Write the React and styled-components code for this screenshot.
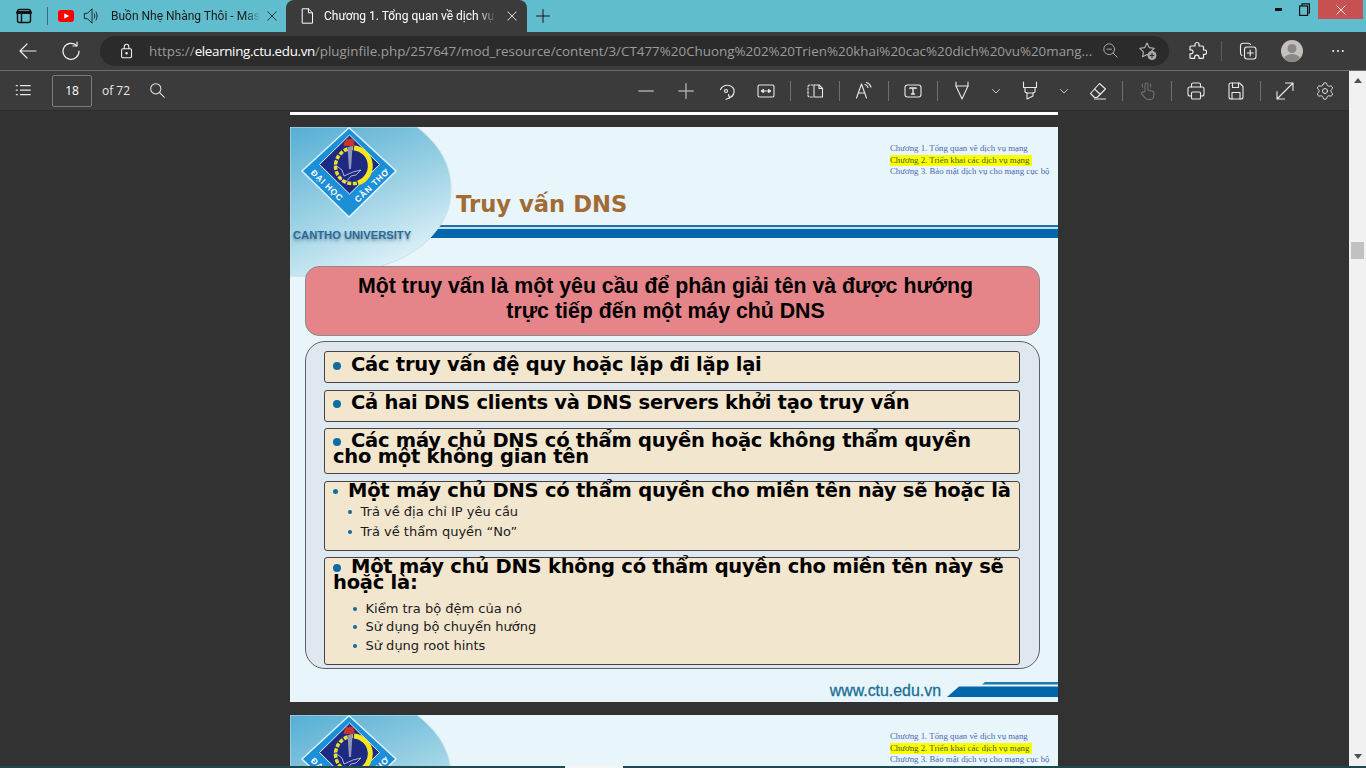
import styled, { createGlobalStyle } from 'styled-components';
import { Settings } from 'lucide-react';

const GlobalStyle = createGlobalStyle`
  html, body {
    margin: 0;
    padding: 0;
    background: #323232;
    overflow: hidden;
  }
  * {
    box-sizing: border-box;
  }
`;

const Browser = styled.div`
  width: 1366px;
  height: 768px;
  display: flex;
  flex-direction: column;
  overflow: hidden;
  font-family: "Open Sans", "Noto Sans", sans-serif;
`;

/* tab strip */

const TabStrip = styled.div`
  height: 32px;
  flex: none;
  display: flex;
  background: #60bdcd;
  color: #111;
`;

const SideButton = styled.div`
  width: 47px;
  display: flex;
  align-items: center;
  justify-content: center;
`;

const TabDivider = styled.div`
  width: 1px;
  height: 18px;
  margin-top: 7px;
  background: #3c6d76;
`;

const Tab = styled.div`
  width: ${(p) => p.$width}px;
  display: flex;
  align-items: center;
  padding-left: ${(p) => p.$inset}px;
  color: ${(p) => (p.$active ? '#fff' : '#1a1a1a')};
  background: ${(p) => (p.$active ? '#3b3b3b' : 'transparent')};
  border-radius: 8px 8px 0 0;
`;

const TabIcon = styled.span`
  display: flex;
  margin-right: ${(p) => p.$gap}px;
`;

const TabTitle = styled.span`
  width: ${(p) => p.$width}px;
  overflow: hidden;
  white-space: nowrap;
  font-family: Roboto, "Open Sans", sans-serif;
  font-size: 12px;
  -webkit-mask-image: linear-gradient(to right, #000 90%, transparent);
  mask-image: linear-gradient(to right, #000 90%, transparent);
`;

const TabClose = styled.span`
  display: flex;
  margin-left: ${(p) => p.$gap}px;
`;

const NewTab = styled.div`
  width: 32px;
  display: flex;
  align-items: center;
  justify-content: center;
`;

const CaptionButtons = styled.div`
  margin-left: auto;
  margin-right: 3px;
  height: 19px;
  display: flex;
`;

const CaptionButton = styled.div`
  width: ${(p) => p.$width}px;
  display: flex;
  align-items: center;
  justify-content: center;
  background: ${(p) => p.$bg || 'transparent'};
  color: ${(p) => p.$color || '#111'};
`;

/* address bar */

const NavBar = styled.div`
  height: 39px;
  flex: none;
  display: flex;
  align-items: center;
  padding-bottom: 1px;
  background: #3b3b3b;
  border-bottom: 1px solid #6c6c6c;
  color: #eee;
`;

const NavButton = styled.div`
  width: ${(p) => p.$width}px;
  flex: none;
  display: flex;
  align-items: center;
  justify-content: center;
`;

const AddressPill = styled.div`
  width: 1069px;
  height: 30px;
  margin: 0 ${(p) => p.$after}px 0 0;
  padding-left: 18px;
  flex: none;
  display: flex;
  align-items: center;
  border-radius: 15px;
  background: #2b2b2b;
`;

const Url = styled.div`
  width: 944px;
  margin-left: 13px;
  flex: none;
  overflow: hidden;
  white-space: nowrap;
  font-size: 13.4px;
  color: #9b9b9b;

  & > b {
    font-weight: 400;
    letter-spacing: -0.35px;
    color: #fff;
  }
`;

const PillIcon = styled.span`
  display: flex;
  margin-left: ${(p) => p.$gap}px;
  color: ${(p) => p.$color || '#a8a8a8'};
`;

const NavDivider = styled.div`
  width: 1px;
  height: 20px;
  margin-left: 6px;
  flex: none;
  background: #5c5c5c;
`;

const Avatar = styled.div`
  width: 22px;
  height: 22px;
  flex: none;
  border-radius: 50%;
  overflow: hidden;
  background: #c4c0bd;
`;

/* pdf toolbar */

const PdfBar = styled.div`
  height: 40px;
  flex: none;
  display: flex;
  align-items: center;
  padding-right: 4px;
  background: #3b3b3b;
  border-bottom: 1px solid #2c2c2c;
  color: #e8e8e8;
  font-size: 12px;
`;

const PageInput = styled.div`
  width: 40px;
  height: 32px;
  margin: 0 10px 0 4px;
  flex: none;
  display: flex;
  align-items: center;
  justify-content: center;
  border: 1px solid #7c7c7c;
  border-radius: 2px;
  color: #fff;
`;

const PageCount = styled.span`
  width: 27px;
  flex: none;
  white-space: nowrap;
`;

const Tools = styled.div`
  margin-left: auto;
  display: flex;
  align-items: center;
`;

const Tool = styled.div`
  width: ${(p) => p.$width || 40}px;
  height: 32px;
  display: flex;
  align-items: center;
  justify-content: center;
  color: ${(p) => p.$color || '#e8e8e8'};
`;

const ToolSep = styled.div`
  width: 1px;
  height: 20px;
  margin: 0 4px;
  background: #707070;
`;

/* viewer */

const Workspace = styled.div`
  flex: 1;
  min-height: 0;
  display: flex;
`;

const DocColumn = styled.div`
  flex: 1;
  min-width: 0;
  display: flex;
  flex-direction: column;
`;

const Viewer = styled.div`
  flex: 1;
  min-height: 0;
  display: flex;
  flex-direction: column;
  align-items: center;
  padding-right: 1px;
  overflow: hidden;
  background: #323232;
`;

const PrevEdge = styled.div`
  width: 768px;
  height: 3px;
  margin-top: 1px;
  flex: none;
  background: #fff;
`;

const Scrollbar = styled.div`
  width: 17px;
  flex: none;
  position: relative;
  display: flex;
  flex-direction: column;
  align-items: center;
  justify-content: space-between;
  padding: 7px 0;
  background: #f1f1f1;
`;

const Thumb = styled.div`
  position: absolute;
  top: 171px;
  left: 2px;
  width: 13px;
  height: 17px;
  background: #c1c1c1;
`;

const Arrow = styled.div`
  width: 0;
  height: 0;
  border-left: 4px solid transparent;
  border-right: 4px solid transparent;
  border-${(p) => (p.$up ? 'bottom' : 'top')}: 5px solid #505050;
`;

const TaskEdge = styled.div`
  height: 2px;
  flex: none;
  display: flex;
  padding-left: 565px;
  background: #1f474e;

  & > i {
    width: 58px;
    background: #f4f4f4;
  }
`;

/* slide */

const Slide = styled.section`
  width: 768px;
  height: 575px;
  margin-top: ${(p) => p.$top}px;
  flex: none;
  position: relative;
  display: flex;
  flex-direction: column;
  overflow: hidden;
  background: #e8f6fb;
`;

const Backdrop = styled.svg`
  position: absolute;
  top: 0;
  left: 0;
`;

const SlideHead = styled.header`
  height: 139px;
  flex: none;
  display: grid;
  grid-template-columns: 166px 1fr;
`;

const Brand = styled.div`
  position: relative;
  display: flex;
  flex-direction: column;
  padding-left: 3px;
`;

const BrandLogo = styled.svg`
  margin-left: 8px;
  display: block;
`;

const BrandName = styled.div`
  margin-top: 10px;
  font-family: "Liberation Sans", sans-serif;
  font-size: 11.2px;
  line-height: 14px;
  font-weight: 700;
  white-space: nowrap;
  color: #2c6a96;
  text-shadow: 0 2px 3px rgba(60, 90, 120, 0.55);
`;

const HeadMain = styled.div`
  display: flex;
  flex-direction: column;
`;

const Chapters = styled.ul`
  list-style: none;
  width: 159px;
  height: 49px;
  margin: 16px 9px 0 auto;
  padding: 0;
  font-family: "Liberation Serif", serif;
  font-size: 8.8px;
  line-height: 11.5px;
  white-space: nowrap;
  color: #4f66b5;
`;

const Chapter = styled.li`
  width: ${(p) => (p.$current ? '142px' : 'auto')};
  background: ${(p) => (p.$current ? '#ffff00' : 'transparent')};
  color: ${(p) => (p.$current ? '#3a6130' : 'inherit')};
`;

const SlideTitle = styled.h1`
  height: 30px;
  margin: 0;
  font-family: "DejaVu Sans", sans-serif;
  font-size: 22.7px;
  line-height: 24px;
  font-weight: 700;
  color: #a26b35;
`;

const TitleRule = styled.div`
  height: 13px;
  margin: 3px 0 0 -50px;
  flex: none;
  border-top: 2px solid #1f6ea6;
  background: linear-gradient(to bottom, #c4e2ee 0 2px, #0066ab 2px);
`;

const SlideBody = styled.div`
  position: relative;
  margin: 0 18px 0 15px;
  display: flex;
  flex-direction: column;
  gap: 5px;
`;

const Lead = styled.div`
  height: 70px;
  padding: 7px 14px 0 0;
  border: 1px solid #8b8b8b;
  border-radius: 14px;
  background: #e5858a;
  text-align: center;
  font-family: "Liberation Sans", sans-serif;
  font-size: 21.3px;
  line-height: 25px;
  font-weight: 700;
  color: #000;
`;

const Panel = styled.div`
  height: 328px;
  padding: 9px 19px 0 18px;
  display: flex;
  flex-direction: column;
  gap: 6.5px;
  border: 1px solid #606060;
  border-radius: 20px;
  background: #dfe7f1;
`;

const Row = styled.div`
  height: ${(p) => p.$height}px;
  flex: none;
  padding: ${(p) => p.$top}px 0 0 8px;
  border: 1px solid #444;
  border-radius: 3px;
  background: #f2e6cf;
  font-family: "DejaVu Sans", sans-serif;
  color: #000;
`;

const RowText = styled.div`
  font-size: 19.5px;
  line-height: 16px;
  letter-spacing: -0.24px;
  font-weight: 700;
  white-space: nowrap;
`;

const Dot = styled.span`
  display: inline-block;
  width: ${(p) => p.$size}px;
  height: ${(p) => p.$size}px;
  margin-right: 10px;
  vertical-align: ${(p) => p.$lift}px;
  border-radius: 50%;
  background: #0e6ca0;
`;

const SubList = styled.ul`
  list-style: none;
  margin: ${(p) => p.$top}px 0 0 ${(p) => p.$left}px;
  padding: 0;
  display: flex;
  flex-direction: column;
  gap: ${(p) => p.$gap}px;
`;

const SubItem = styled.li`
  display: flex;
  align-items: center;
  gap: 8.5px;
  font-size: 13px;
  line-height: 16px;
  color: #1a1a1a;

  &::before {
    content: '';
    width: 4px;
    height: 4px;
    border-radius: 50%;
    background: #0e6ca0;
  }
`;

const SlideFoot = styled.footer`
  margin-top: auto;
  height: 33px;
  flex: none;
  display: flex;
  align-items: flex-end;
  justify-content: flex-end;
`;

const FootUrl = styled.span`
  margin: 0 6px 3px 0;
  font-family: "Liberation Sans", sans-serif;
  font-size: 15.9px;
  line-height: 17px;
  color: #1a6f96;
  -webkit-text-stroke: 0.3px #1a6f96;
`;

const FootMark = styled.svg`
  display: block;
  margin-bottom: 5px;
`;

/* icons */

const Line = ({ size = 20, sw = 1.2, children, ...rest }) => (
  <svg
    width={size}
    height={size}
    viewBox="0 0 20 20"
    fill="none"
    stroke="currentColor"
    strokeWidth={sw}
    strokeLinecap="round"
    strokeLinejoin="round"
    {...rest}
  >
    {children}
  </svg>
);

const SidebarIcon = () => (
  <Line sw={1.4} size={20}>
    <rect x="3.5" y="3.5" width="13" height="13" rx="2" />
    <path d="M3.5 6.5h13" strokeWidth="3" />
    <path d="M7.5 6v10" />
  </Line>
);

const YoutubeIcon = () => (
  <svg width="16" height="12" viewBox="0 0 16 12">
    <rect width="16" height="12" rx="3" fill="#f00" />
    <path d="M6.3 3.3v5.4L11 6z" fill="#fff" />
  </svg>
);

const SpeakerIcon = () => (
  <Line size={18} sw={1}>
    <path d="M2 7h3l5-5v16l-5-5H2z" />
    <path d="M12.5 7.5c.8 1.4.8 3.600 0 5M14.500 5.500c1.500 2.800 1.500 6.200 0 9" />
  </Line>
);

const DocIcon = () => (
  <Line size={18} sw={1.1}>
    <path d="M4 2h6.500L15 6.500V18H4z" />
    <path d="M10.500 2v4.500H15" />
  </Line>
);

const CloseIcon = () => (
  <Line size={12} sw={1.4}>
    <path d="M3 3l14 14M17 3L3 17" />
  </Line>
);

const PlusIcon = ({ size = 16, sw = 1.2 }) => (
  <Line size={size} sw={sw}>
    <path d="M10 2v16M2 10h16" />
  </Line>
);

const BackIcon = () => (
  <Line sw={1.2}>
    <path d="M18 10H2M9 3l-7 7 7 7" />
  </Line>
);

const RefreshIcon = () => (
  <Line sw={1.2}>
    <path d="M15.500 4.500A8 8 0 1 0 18 10" />
    <path d="M16 1v4h-4" />
  </Line>
);

const LockIcon = () => (
  <Line size={18} sw={1.2}>
    <rect x="4" y="7.500" width="11" height="10" rx="1.500" />
    <path d="M7 7.500V5a2.500 2.500 0 0 1 5 0v2.500" />
    <circle cx="9.500" cy="12.500" r=".8" fill="currentColor" />
  </Line>
);

const ZoomOutIcon = () => (
  <Line size={18} sw={1.1}>
    <circle cx="8" cy="8" r="6" />
    <path d="M5.500 8h5M12.500 12.500L17 17" />
  </Line>
);

const StarAddIcon = () => (
  <svg width="20" height="20" viewBox="0 0 20 20">
    <path
      d="M9 2l2.200 4.600 5 .7-3.600 3.500.8 5L9 13.500 4.600 15.800l.8-5L1.800 7.300l5-.7z"
      fill="none"
      stroke="#b4b4b4"
      strokeWidth="1.100"
      strokeLinejoin="round"
    />
    <circle cx="14" cy="14.500" r="4.500" fill="#a8a8a8" />
    <path d="M14 12.300v4.400M11.800 14.500h4.400" stroke="#2b2b2b" strokeWidth="1.200" />
  </svg>
);

const PuzzleIcon = () => (
  <Line sw={1.2}>
    <path d="M8 3.500a2 2 0 0 1 4 0V5h3.500a1 1 0 0 1 1 1v3h1a2.200 2.200 0 0 1 0 4.400h-1v3a1 1 0 0 1-1 1H12v-1a2.200 2.200 0 0 0-4.400 0v1H4a1 1 0 0 1-1-1v-3.500h1a2 2 0 0 0 0-4H3V6a1 1 0 0 1 1-1h4z" />
  </Line>
);

const CollectionsIcon = () => (
  <Line sw={1.1}>
    <path d="M4 14.500c-1-.5-1.500-1.300-1.500-2.500V5c0-1.800 1-2.800 2.800-2.800h5c1 0 1.800.4 2.300 1.300" />
    <rect x="6.500" y="6" width="11.500" height="12" rx="2.500" />
    <path d="M12.200 9v6M9.200 12h6" />
  </Line>
);

const ListIcon = () => (
  <Line size={18} sw={1.2}>
    <path d="M6 4h11M6 9h11M6 14h11" />
    <path d="M1.500 4h1M1.500 9h1M1.500 14h1" strokeWidth="1.600" />
  </Line>
);

const SearchIcon = () => (
  <Line size={17} sw={1.2}>
    <circle cx="8" cy="8" r="6" />
    <path d="M12.500 12.500L18 18" />
  </Line>
);

const RotateIcon = () => (
  <Line sw={1.2}>
    <path d="M4.500 8.500A7.500 7.500 0 0 1 18 8.500c.6 4-1.500 7-4.500 8.300" />
    <path d="M12.500 13.500l1 3.500-3.500 1.200" />
    <circle cx="10" cy="10" r="1.500" />
  </Line>
);

const FitWidthIcon = () => (
  <Line sw={1.1}>
    <rect x="2" y="4" width="16" height="12" rx="1.500" />
    <path d="M5.500 10h9" />
    <path d="M7.500 8.500L5.500 10l2 1.500zM12.500 8.500l2 1.500-2 1.500z" fill="currentColor" />
  </Line>
);

const PageViewIcon = () => (
  <Line sw={1.1}>
    <path d="M8 4H4.500A1.500 1.500 0 0 0 3 5.500v9A1.500 1.500 0 0 0 4.500 16H8" strokeDasharray="2 1.500" />
    <path d="M9 4h5l3.500 3.500V16H9z" />
    <path d="M14 4v3.500h3.500" />
  </Line>
);

const ReadAloudIcon = () => (
  <Line sw={1.1}>
    <path d="M2.500 17L7.500 3l5 14M4.500 12h6" />
    <path d="M11 3.500c1.500.4 2.500 1.400 3 3M12.500 1.500c2.200.6 3.700 2.100 4.500 4.500" />
  </Line>
);

const TextBoxIcon = () => (
  <Line sw={1.1}>
    <rect x="2" y="4" width="16" height="12" rx="2.500" />
    <path d="M7 7.500V7h6v.5M10 7v6M8.500 13h3" strokeWidth="1.400" />
  </Line>
);

const DrawIcon = () => (
  <Line sw={1.1}>
    <path d="M4 1v4l6 13 6-13V1" />
    <path d="M4 5h12" />
  </Line>
);

const ChevronIcon = () => (
  <Line size={10} sw={1.600}>
    <path d="M3 7l7 7 7-7" />
  </Line>
);

const HighlightIcon = () => (
  <Line sw={1.1}>
    <path d="M3.500 1v5.500h13V1" />
    <path d="M5 6.500V11l2 1v6l6-3v-3l2-1V6.500" />
    <path d="M7 12h6" />
  </Line>
);

const EraserIcon = () => (
  <Line sw={1.1}>
    <path d="M11.500 2.500l6 5.500-8.500 8.500H6.500L2.500 12.500z" />
    <path d="M6.500 8l6 5.500M6.500 18h11" />
  </Line>
);

const TouchIcon = () => (
  <Line sw={1.1}>
    <path d="M8 10V3.500a1.500 1.500 0 0 1 3 0V9l4 1c1.500.5 2.200 1.500 2 3l-.5 3c-.3 1.500-1 2.500-2.500 2.500h-3c-1.200 0-2-.5-2.700-1.500L4.500 13c-.8-1.500 1-2.800 2.200-1.500z" />
    <path d="M5.500 6a4 4 0 0 1 0-3M13.500 6a4 4 0 0 0 0-3" />
  </Line>
);

const PrintIcon = () => (
  <Line sw={1.1}>
    <path d="M5.500 6V3.500A1.500 1.500 0 0 1 7 2h6a1.500 1.500 0 0 1 1.500 1.500V6" />
    <path d="M5.500 15H4a2 2 0 0 1-2-2V8a2 2 0 0 1 2-2h12a2 2 0 0 1 2 2v5a2 2 0 0 1-2 2h-1.500" />
    <rect x="5.500" y="11" width="9" height="7" rx="1" />
  </Line>
);

const SaveIcon = () => (
  <Line sw={1.1}>
    <path d="M3 4a2 2 0 0 1 2-2h8.500L17 5.500V16a2 2 0 0 1-2 2H5a2 2 0 0 1-2-2z" />
    <path d="M6.500 2v4.500h6V2M6 18v-6.500h8V18" />
  </Line>
);

const ExpandIcon = () => (
  <Line sw={1.1}>
    <path d="M2 18L18 2M10.500 2H18v7.500M2 10.500V18h7.500" />
  </Line>
);

const Logo = () => (
  <BrandLogo width="98" height="91" viewBox="0 0 98 91">
    <path d="M48 .8l47 43.200-47 46L1 44z" fill="#1b8fd8" stroke="#dff3fb" strokeWidth="1.500" />
    <path d="M48.500 8l30 29.500-30 29.500-30-29.500z" fill="#1e2a82" stroke="#e8f6fb" strokeWidth="1" />
    <path d="M53 21a18 18 0 0 1 4 35" fill="none" stroke="#f4e61f" strokeWidth="5" />
    <path
      d="M52 21a18 18 0 0 0-16 11a18 18 0 0 0 5 21c5 4 11 4 16 3"
      fill="none"
      stroke="#e9de2a"
      strokeWidth="3.500"
      strokeDasharray="4 1.500"
    />
    <path d="M46.500 20h5l-1.500 22h-2z" fill="#8e97b8" />
    <path d="M43 19c-1-4 2-5 3-8 1 2 2 2 3 0 1 2 2 1 2 0 2 3 3 5 2 8z" fill="#c9342a" />
    <path
      d="M33 37l8 6 2 6 9-4 8-2-5 5-5 1-6 7-6-6"
      fill="none"
      stroke="#cdd6ea"
      strokeWidth=".8"
    />
    <text
      x="24"
      y="60.500"
      transform="rotate(44 24 60.500)"
      textAnchor="middle"
      fontFamily="Liberation Sans, sans-serif"
      fontSize="8.500"
      fontWeight="700"
      letterSpacing=".7"
      fill="#fff"
    >
      ĐẠI HỌC
    </text>
    <text
      x="73"
      y="60.500"
      transform="rotate(-44 73 60.500)"
      textAnchor="middle"
      fontFamily="Liberation Sans, sans-serif"
      fontSize="8.500"
      fontWeight="700"
      letterSpacing=".7"
      fill="#fff"
    >
      CẦN THƠ
    </text>
  </BrandLogo>
);

const SlideHeader = ({ title }) => (
  <>
    <Backdrop width="170" height="155" viewBox="0 0 170 155">
      <defs>
        <linearGradient id="blob" x1="0" y1="0" x2=".45" y2="1">
          <stop offset="0" stopColor="#55aed3" />
          <stop offset=".55" stopColor="#9bd1e4" />
          <stop offset="1" stopColor="#dcf0f7" />
        </linearGradient>
      </defs>
      <path
        d="M0 0H127C150 18 161 38 161 62C161 84 152 98 140 111C122 130 96 139 72 144C46 149 22 150 0 149Z"
        fill="url(#blob)"
        stroke="#c4e1ec"
      />
    </Backdrop>
    <SlideHead>
      <Brand>
        <Logo />
        <BrandName>CANTHO UNIVERSITY</BrandName>
      </Brand>
      <HeadMain>
        <Chapters>
          <Chapter>Chương 1. Tổng quan về dịch vụ mạng</Chapter>
          <Chapter $current>Chương 2. Triển khai các dịch vụ mạng</Chapter>
          <Chapter>Chương 3. Bảo mật dịch vụ cho mạng cục bộ</Chapter>
        </Chapters>
        <SlideTitle>{title}</SlideTitle>
        <TitleRule />
      </HeadMain>
    </SlideHead>
  </>
);

export default function App() {
  return (
    <Browser>
      <GlobalStyle />

      <TabStrip>
        <SideButton>
          <SidebarIcon />
        </SideButton>
        <TabDivider />
        <Tab $width={238} $inset={10}>
          <TabIcon $gap={9}>
            <YoutubeIcon />
          </TabIcon>
          <TabIcon $gap={10}>
            <SpeakerIcon />
          </TabIcon>
          <TabTitle $width={149}>Buồn Nhẹ Nhàng Thôi - Masew</TabTitle>
          <TabClose $gap={6}>
            <CloseIcon />
          </TabClose>
        </Tab>
        <Tab $width={241} $inset={13} $active>
          <TabIcon $gap={7}>
            <DocIcon />
          </TabIcon>
          <TabTitle $width={172}>Chương 1. Tổng quan về dịch vụ mạng</TabTitle>
          <TabClose $gap={10}>
            <CloseIcon />
          </TabClose>
        </Tab>
        <NewTab>
          <PlusIcon />
        </NewTab>
        <CaptionButtons>
          <CaptionButton $width={26}>
            <svg width="7" height="3" viewBox="0 0 7 3">
              <rect width="7" height="3" fill="#111" />
            </svg>
          </CaptionButton>
          <CaptionButton $width={27}>
            <svg width="11" height="13" viewBox="0 0 11 13" fill="none" stroke="#111" strokeWidth="1.200">
              <rect x=".6" y="3" width="8" height="9.400" />
              <path d="M3 3V.8h7.400V10H8.600" />
            </svg>
          </CaptionButton>
          <CaptionButton $width={45} $bg="#c75050" $color="#fff">
            <CloseIcon />
          </CaptionButton>
        </CaptionButtons>
      </TabStrip>

      <NavBar>
        <NavButton $width={56}>
          <BackIcon />
        </NavButton>
        <NavButton $width={30}>
          <RefreshIcon />
        </NavButton>
        <NavButton $width={14} />
        <AddressPill $after={10}>
          <PillIcon $gap={0} $color="#eee">
            <LockIcon />
          </PillIcon>
          <Url>
            https://<b>elearning.ctu.edu.vn</b>/pluginfile.php/257647/mod_resource/content/3/CT477%20Chuong%202%20Trien%20khai%20cac%20dich%20vu%20mang...
          </Url>
          <PillIcon $gap={9}>
            <ZoomOutIcon />
          </PillIcon>
          <PillIcon $gap={18}>
            <StarAddIcon />
          </PillIcon>
        </AddressPill>
        <NavButton $width={36}>
          <PuzzleIcon />
        </NavButton>
        <NavDivider />
        <NavButton $width={51}>
          <CollectionsIcon />
        </NavButton>
        <NavButton $width={38}>
          <Avatar>
            <svg width="22" height="22" viewBox="0 0 22 22">
              <circle cx="11" cy="8.500" r="4.500" fill="#8b8784" />
              <ellipse cx="11" cy="19.500" rx="8" ry="5.500" fill="#8b8784" />
            </svg>
          </Avatar>
        </NavButton>
        <NavButton $width={54}>
          <Line size={16} sw={0}>
            <circle cx="4" cy="10" r="1.300" fill="currentColor" />
            <circle cx="10" cy="10" r="1.300" fill="currentColor" />
            <circle cx="16" cy="10" r="1.300" fill="currentColor" />
          </Line>
        </NavButton>
      </NavBar>

      <Workspace>
        <DocColumn>
          <PdfBar>
            <Tool $width={48}>
              <ListIcon />
            </Tool>
            <PageInput>18</PageInput>
            <PageCount>of 72</PageCount>
            <Tool $width={56}>
              <SearchIcon />
            </Tool>
            <Tools>
              <Tool $color="#a8a8a8">
                <Line size={18} sw={1.6}>
                  <path d="M2 10h16" />
                </Line>
              </Tool>
              <Tool $color="#a8a8a8">
                <PlusIcon size={18} sw={1.6} />
              </Tool>
              <Tool>
                <RotateIcon />
              </Tool>
              <Tool>
                <FitWidthIcon />
              </Tool>
              <ToolSep />
              <Tool>
                <PageViewIcon />
              </Tool>
              <ToolSep />
              <Tool>
                <ReadAloudIcon />
              </Tool>
              <ToolSep />
              <Tool>
                <TextBoxIcon />
              </Tool>
              <ToolSep />
              <Tool>
                <DrawIcon />
              </Tool>
              <Tool $width={28}>
                <ChevronIcon />
              </Tool>
              <Tool>
                <HighlightIcon />
              </Tool>
              <Tool $width={28}>
                <ChevronIcon />
              </Tool>
              <Tool>
                <EraserIcon />
              </Tool>
              <ToolSep />
              <Tool $color="#6f6f6f">
                <TouchIcon />
              </Tool>
              <ToolSep />
              <Tool>
                <PrintIcon />
              </Tool>
              <Tool>
                <SaveIcon />
              </Tool>
              <ToolSep />
              <Tool>
                <ExpandIcon />
              </Tool>
              <Tool>
                <Settings size={20} strokeWidth={1.1} />
              </Tool>
            </Tools>
          </PdfBar>
          <Viewer>
            <PrevEdge />
            <Slide $top={12}>
              <SlideHeader title="Truy vấn DNS" />
              <SlideBody>
                <Lead>
                  Một truy vấn là một yêu cầu để phân giải tên và được hướng
                  <br />
                  trực tiếp đến một máy chủ DNS
                </Lead>
                <Panel>
                  <Row $height={32} $top={5}>
                    <RowText>
                      <Dot $size={8} $lift={1} />
                      Các truy vấn đệ quy hoặc lặp đi lặp lại
                    </RowText>
                  </Row>
                  <Row $height={32} $top={4}>
                    <RowText>
                      <Dot $size={8} $lift={1} />
                      Cả hai DNS clients và DNS servers khởi tạo truy vấn
                    </RowText>
                  </Row>
                  <Row $height={46} $top={4}>
                    <RowText>
                      <Dot $size={8} $lift={1} />
                      Các máy chủ DNS có thẩm quyền hoặc không thẩm quyền
                      <br />
                      cho một không gian tên
                    </RowText>
                  </Row>
                  <Row $height={70} $top={1}>
                    <RowText>
                      <Dot $size={5} $lift={3} />
                      Một máy chủ DNS có thẩm quyền cho miền tên này sẽ hoặc là
                    </RowText>
                    <SubList $top={5} $left={15} $gap={4}>
                      <SubItem>Trả về địa chỉ IP yêu cầu</SubItem>
                      <SubItem>Trả về thẩm quyền “No”</SubItem>
                    </SubList>
                  </Row>
                  <Row $height={108} $top={1}>
                    <RowText>
                      <Dot $size={8} $lift={1} />
                      Một máy chủ DNS không có thẩm quyền cho miền tên này sẽ
                      <br />
                      hoặc là:
                    </RowText>
                    <SubList $top={9.5} $left={20} $gap={2.5}>
                      <SubItem>Kiểm tra bộ đệm của nó</SubItem>
                      <SubItem>Sử dụng bộ chuyển hướng</SubItem>
                      <SubItem>Sử dụng root hints</SubItem>
                    </SubList>
                  </Row>
                </Panel>
              </SlideBody>
              <SlideFoot>
                <FootUrl>www.ctu.edu.vn</FootUrl>
                <FootMark width="111" height="15" viewBox="0 0 111 15">
                  <path d="M35 2.500L38 0h73v2.500z" fill="#1f7cab" />
                  <path d="M0 15L12 4.500h99V15z" fill="#0066ab" />
                </FootMark>
              </SlideFoot>
            </Slide>
            <Slide $top={13}>
              <SlideHeader title="" />
            </Slide>
          </Viewer>
        </DocColumn>
        <Scrollbar>
          <Arrow $up />
          <Thumb />
          <Arrow />
        </Scrollbar>
      </Workspace>
      <TaskEdge>
        <i />
      </TaskEdge>
    </Browser>
  );
}
